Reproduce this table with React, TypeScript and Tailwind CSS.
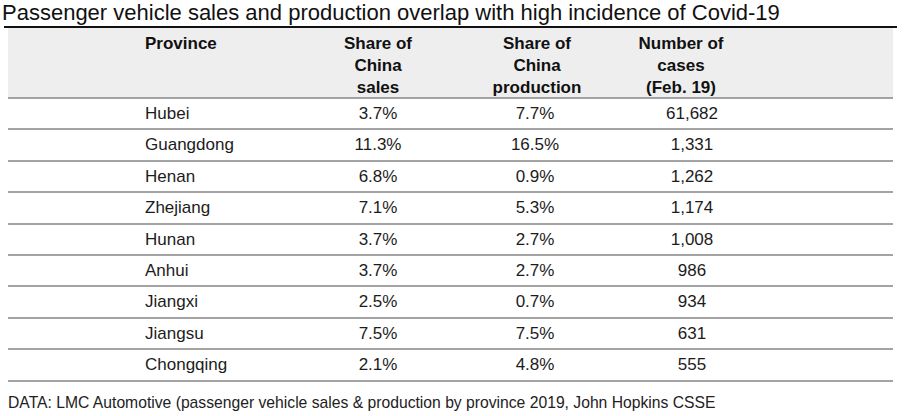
const rows: [string, string, string, string][] = [
  ["Hubei", "3.7%", "7.7%", "61,682"],
  ["Guangdong", "11.3%", "16.5%", "1,331"],
  ["Henan", "6.8%", "0.9%", "1,262"],
  ["Zhejiang", "7.1%", "5.3%", "1,174"],
  ["Hunan", "3.7%", "2.7%", "1,008"],
  ["Anhui", "3.7%", "2.7%", "986"],
  ["Jiangxi", "2.5%", "0.7%", "934"],
  ["Jiangsu", "7.5%", "7.5%", "631"],
  ["Chongqing", "2.1%", "4.8%", "555"],
];

// grid: spacer | province | sales | production | cases | rest
const cols = "grid grid-cols-[137px_155px_156px_158px_152px_1fr]";

export default function App() {
  return (
    <div
      className="w-[906px] h-[416px] bg-white text-[#1c1c1c] overflow-hidden"
      style={{ fontFamily: '"Liberation Sans", Arial, sans-serif' }}
    >
      <div className="pl-[2px] h-[26px] text-[22px] leading-[25px] text-[#111]">
        Passenger vehicle sales and production overlap with high incidence of Covid-19
      </div>
      <div className="mx-[4px] w-[893px] h-[2px] bg-[#111]" />

      <div className="ml-[8px] w-[885px]">
        <div className={`${cols} h-[71px] bg-[#eeeeee] border-b-2 border-[#a3a3a3] pt-[5px] text-[17px] leading-[22px] font-bold text-[#111]`}>
          <div />
          <div>Province</div>
          <div className="text-center">
            Share of
            <br />
            China
            <br />
            sales
          </div>
          <div className="text-center pl-[4px]">
            Share of
            <br />
            China
            <br />
            production
          </div>
          <div className="text-center pr-[18px]">
            Number of
            <br />
            cases
            <br />
            (Feb. 19)
          </div>
          <div />
        </div>

        {rows.map(([name, sales, prod, cases]) => (
          <div
            key={name}
            className={`${cols} h-[31.4px] items-center border-b-2 border-[#a3a3a3] text-[17px]`}
          >
            <div />
            <div>{name}</div>
            <div className="text-center">{sales}</div>
            <div className="text-center">{prod}</div>
            <div className="text-center pl-[4px]">{cases}</div>
            <div />
          </div>
        ))}
      </div>

      <div className="pl-[8px] mt-[11px] text-[15.7px] leading-[20px] text-[#222]">
        DATA: LMC Automotive (passenger vehicle sales &amp; production by province 2019, John Hopkins CSSE
      </div>
    </div>
  );
}
